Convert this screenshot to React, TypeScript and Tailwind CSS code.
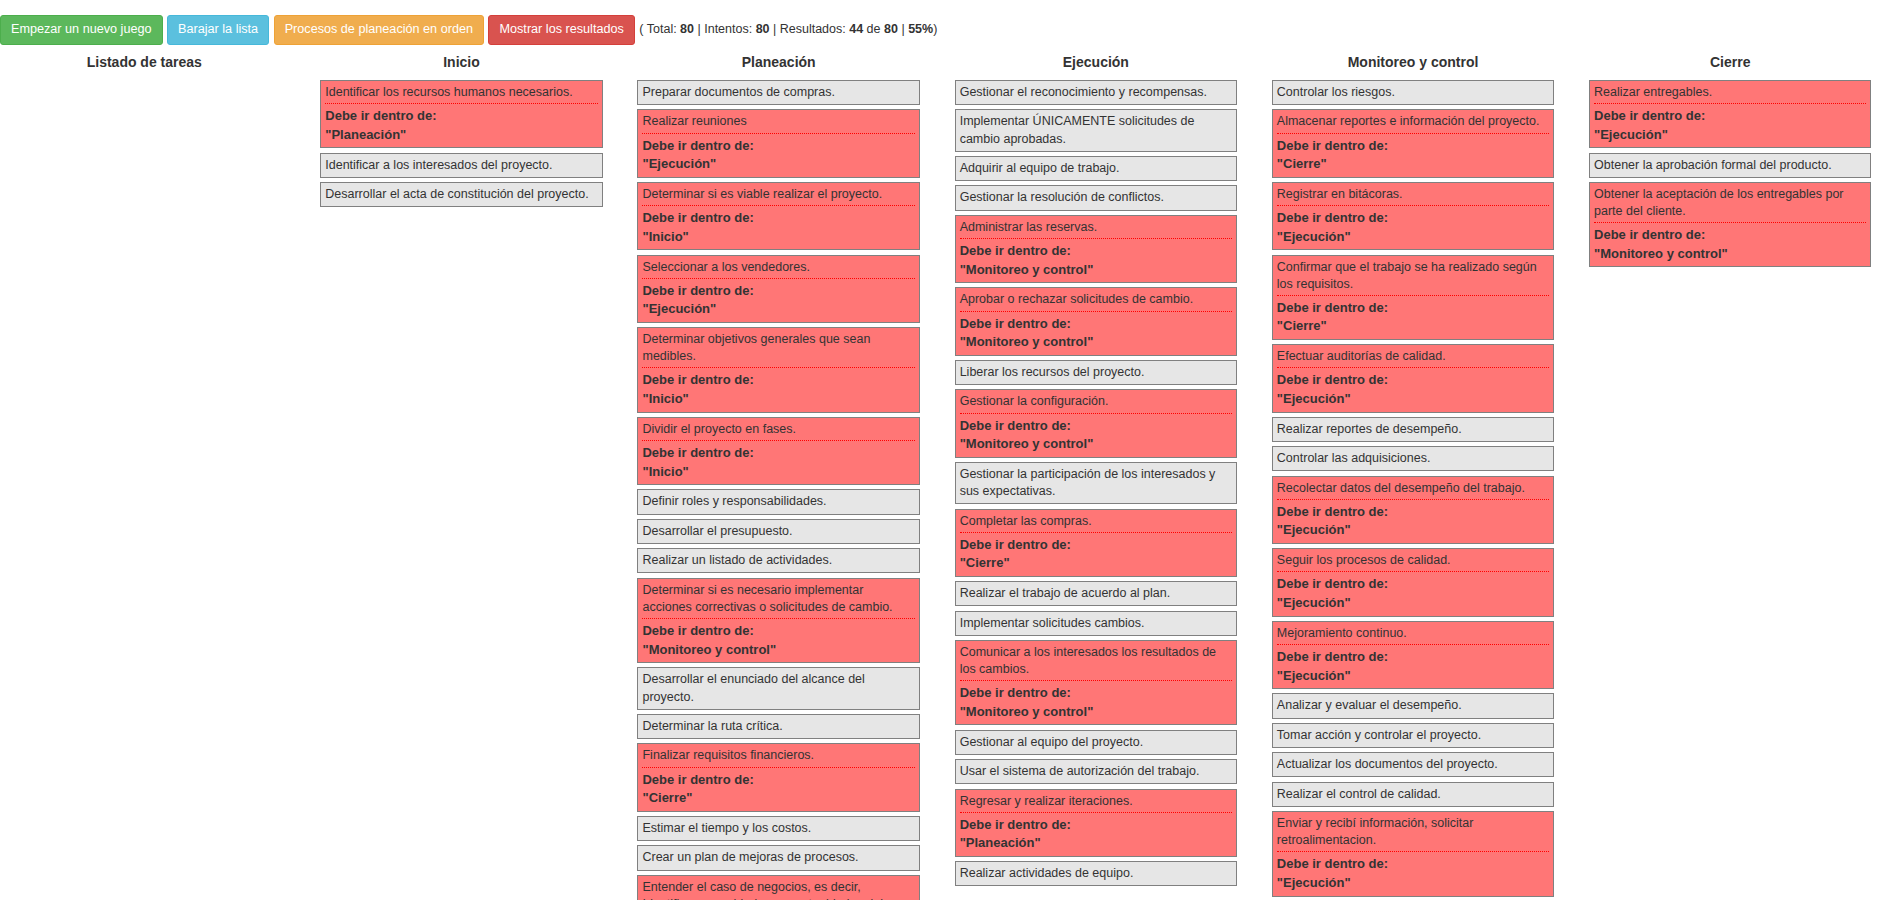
import React from "react";

type Task = { t: string; go?: string };

// Columnas del juego de procesos
const columns: { title: string; items: Task[] }[] = [
  { title: "Listado de tareas", items: [] },
  {
    title: "Inicio",
    items: [
      { t: "Identificar los recursos humanos necesarios.", go: "Planeación" },
      { t: "Identificar a los interesados del proyecto." },
      { t: "Desarrollar el acta de constitución del proyecto." },
    ],
  },
  {
    title: "Planeación",
    items: [
      { t: "Preparar documentos de compras." },
      { t: "Realizar reuniones", go: "Ejecución" },
      { t: "Determinar si es viable realizar el proyecto.", go: "Inicio" },
      { t: "Seleccionar a los vendedores.", go: "Ejecución" },
      { t: "Determinar objetivos generales que sean medibles.", go: "Inicio" },
      { t: "Dividir el proyecto en fases.", go: "Inicio" },
      { t: "Definir roles y responsabilidades." },
      { t: "Desarrollar el presupuesto." },
      { t: "Realizar un listado de actividades." },
      {
        t: "Determinar si es necesario implementar acciones correctivas o solicitudes de cambio.",
        go: "Monitoreo y control",
      },
      { t: "Desarrollar el enunciado del alcance del proyecto." },
      { t: "Determinar la ruta crítica." },
      { t: "Finalizar requisitos financieros.", go: "Cierre" },
      { t: "Estimar el tiempo y los costos." },
      { t: "Crear un plan de mejoras de procesos." },
      {
        t: "Entender el caso de negocios, es decir, Identificar necesidades y oportunidades del negocio.",
        go: "Inicio",
      },
    ],
  },
  {
    title: "Ejecución",
    items: [
      { t: "Gestionar el reconocimiento y recompensas." },
      { t: "Implementar ÚNICAMENTE solicitudes de cambio aprobadas." },
      { t: "Adquirir al equipo de trabajo." },
      { t: "Gestionar la resolución de conflictos." },
      { t: "Administrar las reservas.", go: "Monitoreo y control" },
      { t: "Aprobar o rechazar solicitudes de cambio.", go: "Monitoreo y control" },
      { t: "Liberar los recursos del proyecto." },
      { t: "Gestionar la configuración.", go: "Monitoreo y control" },
      { t: "Gestionar la participación de los interesados y sus expectativas." },
      { t: "Completar las compras.", go: "Cierre" },
      { t: "Realizar el trabajo de acuerdo al plan." },
      { t: "Implementar solicitudes cambios." },
      {
        t: "Comunicar a los interesados los resultados de los cambios.",
        go: "Monitoreo y control",
      },
      { t: "Gestionar al equipo del proyecto." },
      { t: "Usar el sistema de autorización del trabajo." },
      { t: "Regresar y realizar iteraciones.", go: "Planeación" },
      { t: "Realizar actividades de equipo." },
    ],
  },
  {
    title: "Monitoreo y control",
    items: [
      { t: "Controlar los riesgos." },
      { t: "Almacenar reportes e información del proyecto.", go: "Cierre" },
      { t: "Registrar en bitácoras.", go: "Ejecución" },
      { t: "Confirmar que el trabajo se ha realizado según los requisitos.", go: "Cierre" },
      { t: "Efectuar auditorías de calidad.", go: "Ejecución" },
      { t: "Realizar reportes de desempeño." },
      { t: "Controlar las adquisiciones." },
      { t: "Recolectar datos del desempeño del trabajo.", go: "Ejecución" },
      { t: "Seguir los procesos de calidad.", go: "Ejecución" },
      { t: "Mejoramiento continuo.", go: "Ejecución" },
      { t: "Analizar y evaluar el desempeño." },
      { t: "Tomar acción y controlar el proyecto." },
      { t: "Actualizar los documentos del proyecto." },
      { t: "Realizar el control de calidad." },
      { t: "Enviar y recibí información, solicitar retroalimentacion.", go: "Ejecución" },
    ],
  },
  {
    title: "Cierre",
    items: [
      { t: "Realizar entregables.", go: "Ejecución" },
      { t: "Obtener la aprobación formal del producto." },
      {
        t: "Obtener la aceptación de los entregables por parte del cliente.",
        go: "Monitoreo y control",
      },
    ],
  },
];

const TaskCard = ({ task }: { task: Task }) => {
  if (task.go) {
    return (
      <div className="mb-[4.3px] border border-[#808080] bg-[#ff7676] px-[4px] py-[3px]">
        <div className="border-b border-dotted border-[#ff0000] pb-[2px]">{task.t}</div>
        <div className="mt-[3px] text-[13px] font-bold leading-[18.57px]">
          Debe ir dentro de:
          <br />"{task.go}"
        </div>
      </div>
    );
  }
  return (
    <div className="mb-[4.3px] border border-[#808080] bg-[#e6e6e6] px-[4px] py-[3px]">
      {task.t}
    </div>
  );
};

export default function App() {
  return (
    <div className="min-h-screen bg-white font-['Liberation_Sans',Arial,sans-serif] text-[12.5px] leading-[17.14px] text-[#333]">
      {/* Barra de acciones */}
      <div className="flex items-center gap-[4.5px] pt-[15px]">
        <button className="rounded-[3px] border border-[#4cae4c] bg-[#5cb85c] px-[10px] py-[5px] text-[12.65px] leading-[17.5px] text-white">
          Empezar un nuevo juego
        </button>
        <button className="rounded-[3px] border border-[#46b8da] bg-[#5bc0de] px-[10px] py-[5px] text-[12.65px] leading-[17.5px] text-white">
          Barajar la lista
        </button>
        <button className="rounded-[3px] border border-[#eea236] bg-[#f0ad4e] px-[10px] py-[5px] text-[12.65px] leading-[17.5px] text-white">
          Procesos de planeación en orden
        </button>
        <button className="rounded-[3px] border border-[#d43f3a] bg-[#d9534f] px-[10px] py-[5px] text-[12.65px] leading-[17.5px] text-white">
          Mostrar los resultados
        </button>
        <span>
          ( Total: <b>80</b> | Intentos: <b>80</b> | Resultados: <b>44</b> de <b>80</b> |{" "}
          <b>55%</b>)
        </span>
      </div>

      {/* Columnas */}
      <div className="grid grid-cols-[repeat(6,282.4px)] gap-x-[34.8px] pl-[3.1px]">
        {columns.map((col) => (
          <div key={col.title} className="flex flex-col">
            <h4 className="mb-[8px] mt-[7.5px] text-center text-[14px] font-bold leading-[20px]">
              {col.title}
            </h4>
            {col.items.map((task) => (
              <TaskCard key={task.t} task={task} />
            ))}
          </div>
        ))}
      </div>
    </div>
  );
}
